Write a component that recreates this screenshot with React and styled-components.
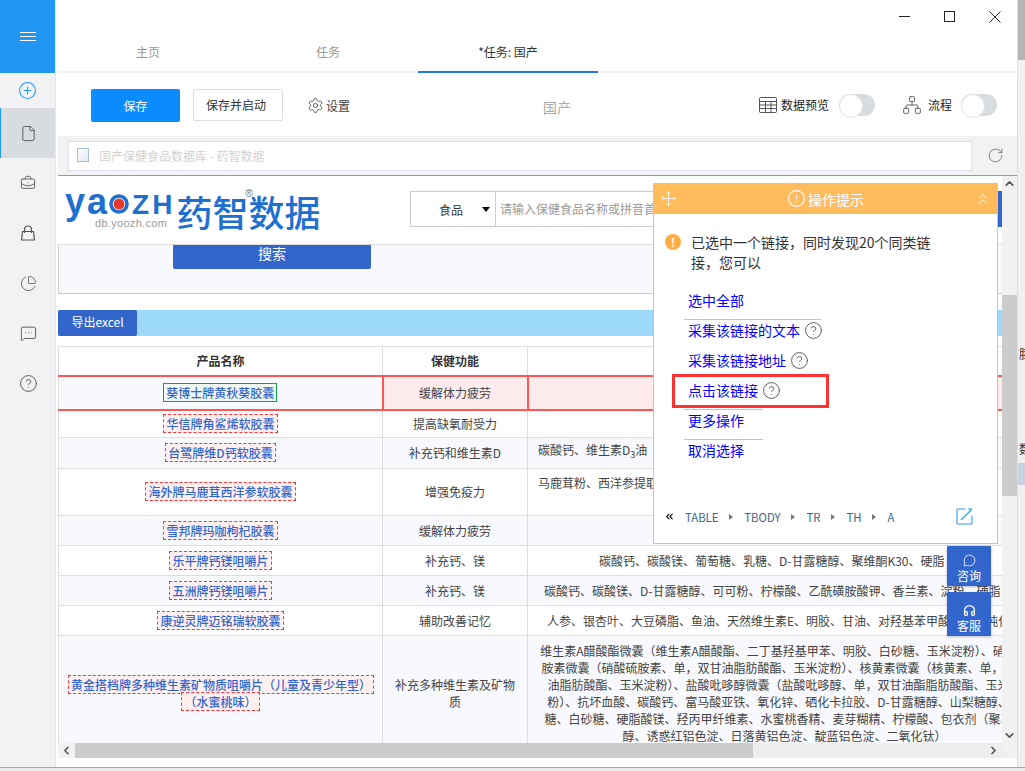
import React from 'react';
import styled, { createGlobalStyle } from 'styled-components';
import {
  File, BriefcaseBusiness, ChartPie, MessageSquareMore, CircleHelp, CirclePlus,
  Settings, Network, RotateCw, Move, ChevronsUp, CircleAlert,
  ChevronUp, ChevronDown, ChevronLeft, ChevronRight, ChevronsLeft, MessageCircle, Headphones,
} from 'lucide-react';

const GlobalStyle = createGlobalStyle`
  html, body, #root { margin: 0; height: 100%; overflow: hidden; }
  body { font-family: "Noto Sans CJK SC", "Noto Sans", sans-serif; font-size: 12px; color: #333; }
  * { box-sizing: border-box; }
`;

const Desktop = styled.div`
  display: flex;
  flex-direction: column;
  height: 100vh;
  background: #efefef;
`;

const Upper = styled.div`
  flex: 0 0 767px;
  display: flex;
  min-height: 0;
`;

const BottomStrip = styled.div`
  flex: 1;
  border-top: 1px solid #a8a8a8;
  background: #ececec;
`;

const BackStrip = styled.div`
  flex: 1;
  position: relative;
  overflow: hidden;
  border-left: 1px solid #ddd;
  background: linear-gradient(#b4b4b4 0 60px, #f0f0f0 60px 463px, #c9d3e0 463px 485px, #f0f0f0 485px);
`;

const BackChar = styled.span`
  position: absolute;
  left: 1px;
  top: ${p => p.$top}px;
`;

const Window = styled.div`
  position: relative;
  width: 1017px;
  display: flex;
  background: #fff;
`;

const Sidebar = styled.aside`
  width: 56px;
  flex: none;
  background: #f2f2f4;
  border-right: 1px solid #e6e6e6;
`;

const MenuButton = styled.div`
  height: 73px;
  background: #2196f3;
  display: flex;
  align-items: center;
  justify-content: center;
`;

const Burger = styled.div`
  width: 16px;
  height: 9px;
  border-top: 1px solid #fff;
  border-bottom: 1px solid #fff;
  position: relative;
  &::after {
    content: '';
    position: absolute;
    left: 0;
    right: 0;
    top: 3px;
    height: 1px;
    background: #fff;
  }
`;

const AddRow = styled.div`
  height: 35px;
  display: flex;
  align-items: center;
  justify-content: center;
  color: #2196f3;
`;

const SideItem = styled.div`
  height: 50px;
  display: flex;
  align-items: center;
  justify-content: center;
  color: #555;
  background: ${p => (p.$active ? '#d9dcdf' : 'transparent')};
  border-left: 1px solid ${p => (p.$active ? '#2196f3' : 'transparent')};
`;

const Main = styled.div`
  flex: 1;
  min-width: 0;
  padding-left: 2px;
  display: flex;
  flex-direction: column;
`;

const TitleBar = styled.div`
  height: 33px;
  display: flex;
  justify-content: flex-end;
`;

const ControlButton = styled.div`
  width: 45px;
  display: flex;
  align-items: center;
  justify-content: center;
`;

const TabStrip = styled.div`
  height: 40px;
  display: flex;
  border-bottom: 2px solid #f2f2f2;
`;

const Tab = styled.div`
  width: 180px;
  height: 40px;
  line-height: 38px;
  text-align: center;
  color: ${p => (p.$active ? '#333' : '#999')};
  border-bottom: 2px solid ${p => (p.$active ? '#1e7bd8' : 'transparent')};
`;

const Toolbar = styled.div`
  height: 63px;
  padding: 16px 20px 0 33px;
  display: flex;
  align-items: flex-start;
`;

const SaveButton = styled.div`
  width: 89px;
  height: 33px;
  line-height: 33px;
  text-align: center;
  color: #fff;
  background: #0a8cff;
  border-radius: 2px;
`;

const StartButton = styled.div`
  width: 90px;
  height: 32px;
  line-height: 30px;
  margin-left: 13px;
  padding-right: 4px;
  text-align: center;
  border: 1px solid #ddd;
  border-radius: 2px;
`;

const SettingsLink = styled.div`
  height: 33px;
  margin-left: 24px;
  display: flex;
  align-items: center;
  gap: 2px;
  color: #444;
`;

const TaskName = styled.div`
  margin: 9px auto 0 193px;
  font-size: 14px;
  line-height: 19px;
  color: #aaa;
`;

const ToolToggle = styled.div`
  height: 22px;
  margin: 5px 0 0 ${p => p.$gap || 0}px;
  display: flex;
  align-items: center;
  color: #222;
`;

const ToggleLabel = styled.span`
  margin: -2px ${p => p.$end}px 0 ${p => p.$gap}px;
`;

const Switch = styled.div`
  width: 36px;
  height: 22px;
  border-radius: 11px;
  background: #d9dcdf;
  position: relative;
  &::before {
    content: '';
    position: absolute;
    left: 0;
    top: 0;
    width: 22px;
    height: 22px;
    border-radius: 50%;
    background: #fff;
    border: 1px solid #e2e2e2;
  }
`;

const UrlBar = styled.div`
  height: 40px;
  padding: 5px 0 0 10px;
  display: flex;
  background: #f2f2f3;
  border-bottom: 1px solid #999;
`;

const UrlInput = styled.div`
  width: 904px;
  height: 30px;
  padding: 0 0 2px 8px;
  display: flex;
  align-items: center;
  gap: 10px;
  background: #fff;
  border: 1px solid #dcdff0;
  color: #d2d2d2;
`;

const PageIcon = styled.div`
  width: 12px;
  height: 14px;
  border: 1px solid #a9bdd4;
  background: linear-gradient(135deg, #fff, #dfe8f2);
`;

const RefreshSlot = styled.div`
  width: 45px;
  display: flex;
  align-items: center;
  justify-content: center;
  padding: 0 0 5px 1px;
  color: #666;
`;

const WebView = styled.div`
  position: relative;
  height: 582px;
  display: grid;
  grid-template-columns: 944px 15px;
  grid-template-rows: 567px 15px;
`;

const Content = styled.div`
  overflow: hidden;
  background: #fff;
`;

const SiteHeader = styled.header`
  height: 69px;
  padding: 15px 0 0 7px;
  display: flex;
  align-items: flex-start;
  border-bottom: 1px solid #ddd;
`;

const Logo = styled.div`
  position: relative;
  height: 40px;
  margin-top: -7px;
  display: flex;
  align-items: baseline;
  color: #1e6fd0;
  font-family: "Liberation Sans", sans-serif;
  font-weight: 700;
  line-height: 36px;
`;

const LogoLower = styled.span`
  font-size: 36px;
  letter-spacing: 2px;
`;

const LogoUpper = styled.span`
  font-size: 28px;
  margin-left: 3px;
  letter-spacing: 3px;
`;

const LogoCn = styled.span`
  align-self: flex-start;
  margin: 9px 0 0 1px;
  font-family: "Noto Sans CJK SC", sans-serif;
  font-size: 36px;
  font-weight: 500;
`;

const LogoDomain = styled.span`
  position: absolute;
  left: 30px;
  top: 33px;
  font-size: 11px;
  font-weight: 400;
  line-height: 12px;
  letter-spacing: 0.3px;
  color: #999;
`;

const LogoMark = styled.span`
  position: absolute;
  left: 180px;
  top: 4px;
  font-size: 11px;
  font-weight: 400;
  line-height: 10px;
  color: #777;
`;

const SearchBox = styled.div`
  margin-left: auto;
  width: 592px;
  height: 36px;
  display: flex;
`;

const SearchKind = styled.div`
  width: 86px;
  padding-left: 28px;
  display: flex;
  align-items: center;
  gap: 19px;
  border: 1px solid #ccc;
  color: #333;
`;

const Caret = styled.i`
  border: 4px solid transparent;
  border-top: 5px solid #000;
  border-bottom: 0;
`;

const SearchInput = styled.div`
  flex: 1;
  padding-left: 4px;
  line-height: 34px;
  color: #999;
  border: 1px solid #ccc;
  border-left: 0;
`;

const SearchSubmit = styled.div`
  width: 80px;
  background: #3366cc;
`;

const SearchPanel = styled.div`
  height: 49px;
  padding-left: 114px;
  background: #f8f9fc;
  border: 1px solid #ccc;
  border-top: 0;
  border-right: 0;
`;

const SearchButton = styled.div`
  width: 198px;
  height: 24px;
  line-height: 16px;
  text-align: center;
  font-size: 14px;
  color: #fff;
  background: #3366cc;
  border-radius: 0 0 2px 2px;
`;

const ExportBar = styled.div`
  height: 26px;
  margin: 16px 0 10px;
  background: #9bd8f9;
`;

const ExportButton = styled.div`
  width: 79px;
  height: 26px;
  line-height: 24px;
  text-align: center;
  color: #fff;
  background: #3366cc;
  border-radius: 2px;
`;

const DataTable = styled.table`
  width: 983px;
  table-layout: fixed;
  border-collapse: collapse;
`;

const Row = styled.tr`
  height: ${p => p.$h}px;
  background: ${p => (p.$odd ? '#f8f9fd' : '#fff')};
`;

const HeadCell = styled.th`
  padding: 0;
  border: 1px solid #ddd;
  font-weight: 700;
  color: #333;
  background: #fff;
`;

const Cell = styled.td`
  padding: 0 0 1px;
  border: 1px solid #ddd;
  text-align: center;
  line-height: 17px;
  color: #444;
`;

const NameCell = styled(Cell)`
  padding: 0 9px 1px;
  ${p => p.$picked && 'border-top: 2px solid #f55; border-bottom: 2px solid #f55;'}
`;

const EffectCell = styled(Cell)`
  padding: 0 8px 1px;
  ${p => p.$picked && 'border: 2px solid #f55; background: #fdeaea;'}
`;

const MaterialCell = styled(Cell)`
  text-align: ${p => (p.$indent === undefined ? 'center' : 'left')};
  padding-left: ${p => p.$indent || 0}px;
  white-space: nowrap;
  overflow: hidden;
  vertical-align: ${p => (p.$top ? 'top' : 'middle')};
  padding-top: ${p => (p.$top ? 5 : 0)}px;
  ${p => p.$picked && 'border: 2px solid #f55; background: #fdeaea;'}
`;

const ProductLink = styled.a`
  padding: 0 2px;
  line-height: 17px;
  font-weight: 500;
  color: #3366cc;
  background: ${p => (p.$picked ? '#f0f8f2' : '#fff0f0')};
  border: 1px ${p => (p.$picked ? 'solid #0ca34a' : 'dashed #f33')};
  -webkit-box-decoration-break: clone;
  box-decoration-break: clone;
`;

const VBar = styled.div`
  grid-column: 2;
  grid-row: 1 / 3;
  display: flex;
  flex-direction: column;
  align-items: center;
  background: #f1f1f1;
  color: #555;
`;

const VArrow = styled.div`
  height: 15px;
  display: flex;
  align-items: center;
  justify-content: center;
`;

const VThumb = styled.div`
  width: 100%;
  height: 201px;
  margin: 104px 0 auto;
  background: #ccc;
`;

const HBar = styled.div`
  display: flex;
  background: #eee;
  color: #555;
`;

const HArrow = styled.div`
  width: 17px;
  display: flex;
  align-items: center;
  justify-content: center;
  background: ${p => (p.$start ? '#f1f1f1' : 'transparent')};
`;

const HThumb = styled.div`
  width: 678px;
  margin-right: auto;
  background: #ccc;
`;

const FloatStack = styled.div`
  position: absolute;
  left: 889px;
  top: 370px;
  display: flex;
  flex-direction: column;
  gap: 6px;
`;

const FloatButton = styled.div`
  width: 44px;
  height: ${p => p.$h}px;
  display: flex;
  flex-direction: column;
  align-items: center;
  justify-content: flex-end;
  padding-bottom: 1px;
  line-height: 18px;
  color: #fff;
  background: #3366cc;
  border-radius: 1px;
  box-shadow: 0 1px 3px rgba(0, 0, 0, 0.25);
`;

const Popup = styled.div`
  position: absolute;
  left: 653px;
  top: 183px;
  width: 345px;
  height: 361px;
  display: flex;
  flex-direction: column;
  background: #fff;
  border: 1px solid #ffbb5c;
  border-top: 0;
`;

const PopupHead = styled.div`
  flex: none;
  height: 31px;
  margin: 0 -1px;
  padding: 0 6px 0 7px;
  display: flex;
  align-items: center;
  justify-content: space-between;
  color: #fff;
  background: #ffbb5c;
`;

const PopupTitle = styled.div`
  display: flex;
  align-items: center;
  gap: 2px;
  font-size: 14px;
`;

const Notice = styled.div`
  margin-top: 18px;
  padding-left: 11px;
  display: flex;
  gap: 10px;
`;

const NoticeDot = styled.div`
  flex: none;
  width: 16px;
  height: 16px;
  margin-top: 2px;
  border-radius: 50%;
  line-height: 16px;
  text-align: center;
  font-size: 12px;
  font-weight: 700;
  color: #fff;
  background: #ffad44;
`;

const NoticeText = styled.div`
  width: 246px;
  font-size: 14px;
  line-height: 20px;
  color: #333;
`;

const ActionList = styled.div`
  margin-top: 8px;
  padding-left: 34px;
`;

const Sep = styled.div`
  width: ${p => p.$w}px;
  height: 1px;
  margin: 9px 0 0 -4px;
  background: #c4c4c4;
`;

const Action = styled.div`
  position: relative;
  height: 20px;
  margin-top: 10px;
  display: flex;
  align-items: center;
  gap: 4px;
  font-size: 14px;
  color: #0000ff;
  ${Sep} + & {
    margin-top: 0;
  }
  svg {
    color: #555;
  }
`;

const ActionMark = styled.div`
  position: absolute;
  left: -16px;
  top: -6px;
  width: 157px;
  height: 34px;
  border: 3px solid #f33;
`;

const Crumbs = styled.div`
  margin: auto 0 18px;
  padding: 0 24px 0 10px;
  display: flex;
  align-items: center;
  font-size: 11.3px;
  color: #3d6585;
`;

const CrumbBack = styled.div`
  display: flex;
  margin-right: 10px;
  color: #111;
`;

const CrumbArrow = styled.i`
  margin: 0 11px;
  border: 3px solid transparent;
  border-left: 4px solid #777;
  border-right: 0;
`;

const CrumbOpen = styled.div`
  margin-left: auto;
  display: flex;
  color: #2b9cf0;
`;

const TAIL_LINES = [
  '维生素A醋酸酯微囊（维生素A醋酸酯、二丁基羟基甲苯、明胶、白砂糖、玉米淀粉）、硝酸硫',
  '胺素微囊（硝酸硫胺素、单，双甘油脂肪酸酯、玉米淀粉）、核黄素微囊（核黄素、单，双甘',
  '油脂肪酸酯、玉米淀粉）、盐酸吡哆醇微囊（盐酸吡哆醇、单，双甘油酯脂肪酸酯、玉米淀',
  '粉）、抗坏血酸、碳酸钙、富马酸亚铁、氧化锌、硒化卡拉胶、D-甘露糖醇、山梨糖醇、麦',
  '糖、白砂糖、硬脂酸镁、羟丙甲纤维素、水蜜桃香精、麦芽糊精、柠檬酸、包衣剂（聚乙二',
  '醇、诱惑红铝色淀、日落黄铝色淀、靛蓝铝色淀、二氧化钛）',
];

const ROWS = [
  { h: 34, name: '葵博士牌黄秋葵胶囊', effect: '缓解体力疲劳', picked: true },
  { h: 28, name: '华信牌角鲨烯软胶囊', effect: '提高缺氧耐受力' },
  { h: 31, name: '台鹭牌维D钙软胶囊', effect: '补充钙和维生素D', text: <>碳酸钙、维生素D<sub style={{ fontSize: 9 }}>3</sub>油</>, indent: 10 },
  { h: 47, name: '海外牌马鹿茸西洋参软胶囊', effect: '增强免疫力', text: '马鹿茸粉、西洋参提取', indent: 10, top: true },
  { h: 30, name: '雪邦牌玛咖枸杞胶囊', effect: '缓解体力疲劳' },
  { h: 30, name: '乐平牌钙镁咀嚼片', effect: '补充钙、镁', text: '碳酸钙、碳酸镁、葡萄糖、乳糖、D-甘露糖醇、聚维酮K30、硬脂', indent: 71 },
  { h: 30, name: '五洲牌钙镁咀嚼片', effect: '补充钙、镁', text: '碳酸钙、碳酸镁、D-甘露糖醇、可可粉、柠檬酸、乙酰磺胺酸钾、香兰素、淀粉、硬脂', indent: 16 },
  { h: 30, name: '康逆灵牌迈铭瑞软胶囊', effect: '辅助改善记忆', text: '人参、银杏叶、大豆磷脂、鱼油、天然维生素E、明胶、甘油、对羟基苯甲酸乙酯、纯化', indent: 19 },
  { h: 115, name: '黄金搭档牌多种维生素矿物质咀嚼片（儿童及青少年型）（水蜜桃味）', effect: '补充多种维生素及矿物质', lines: TAIL_LINES },
];

const CRUMBS = ['TABLE', 'TBODY', 'TR', 'TH', 'A'];

function BagIcon() {
  return (
    <svg width="18" height="18" viewBox="0 0 18 18" fill="none" stroke="currentColor" strokeWidth="1.2">
      <path d="M3.5 7.5h11l1 8.5h-13z" strokeLinejoin="round" />
      <path d="M5.5 9V5.5a3.5 3.5 0 0 1 7 0V9" />
    </svg>
  );
}

function GridIcon() {
  return (
    <svg width="18" height="16" viewBox="0 0 18 16" fill="none" stroke="#555">
      <rect x=".5" y=".5" width="17" height="15" rx="1" />
      <path d="M.5 4.5h17M.5 8h17M.5 11.5h17M6.5 4.5v11M12 4.5v11" />
    </svg>
  );
}

function ExternalIcon() {
  return (
    <svg width="17" height="17" viewBox="0 0 17 17" fill="none" stroke="currentColor" strokeWidth="1.1">
      <path d="M9 1H2a1 1 0 0 0-1 1v13a1 1 0 0 0 1 1h13a1 1 0 0 0 1-1V8" />
      <path d="M5 12 16 1M12 1h4" />
    </svg>
  );
}

function App() {
  return (
    <Desktop>
      <GlobalStyle />
      <Upper>
        <Window>
          <Sidebar>
            <MenuButton><Burger /></MenuButton>
            <AddRow><CirclePlus size={19} strokeWidth={1.3} /></AddRow>
            <SideItem $active><File size={17} strokeWidth={1.3} /></SideItem>
            <SideItem><BriefcaseBusiness size={16} strokeWidth={1.3} /></SideItem>
            <SideItem><BagIcon /></SideItem>
            <SideItem><ChartPie size={17} strokeWidth={1.2} /></SideItem>
            <SideItem><MessageSquareMore size={17} strokeWidth={1.3} /></SideItem>
            <SideItem><CircleHelp size={19} strokeWidth={1.2} /></SideItem>
          </Sidebar>

          <Main>
            <TitleBar>
              <ControlButton>
                <svg width="11" height="11" viewBox="0 0 11 11" stroke="#222"><path d="M0 5.5h11" /></svg>
              </ControlButton>
              <ControlButton>
                <svg width="11" height="11" viewBox="0 0 11 11" stroke="#222" fill="none"><rect x=".5" y=".5" width="10" height="10" /></svg>
              </ControlButton>
              <ControlButton>
                <svg width="12" height="12" viewBox="0 0 12 12" stroke="#222"><path d="M.5.5l11 11M11.5.5l-11 11" /></svg>
              </ControlButton>
            </TitleBar>

            <TabStrip>
              <Tab>主页</Tab>
              <Tab>任务</Tab>
              <Tab $active>*任务: 国产</Tab>
            </TabStrip>

            <Toolbar>
              <SaveButton>保存</SaveButton>
              <StartButton>保存并启动</StartButton>
              <SettingsLink><Settings size={17} strokeWidth={1.2} />设置</SettingsLink>
              <TaskName>国产</TaskName>
              <ToolToggle>
                <GridIcon />
                <ToggleLabel $gap={4} $end={10}>数据预览</ToggleLabel>
                <Switch />
              </ToolToggle>
              <ToolToggle $gap={27}>
                <Network size={20} strokeWidth={1.1} color="#555" />
                <ToggleLabel $gap={6} $end={9}>流程</ToggleLabel>
                <Switch />
              </ToolToggle>
            </Toolbar>

            <UrlBar>
              <UrlInput><PageIcon />国产保健食品数据库 - 药智数据</UrlInput>
              <RefreshSlot><RotateCw size={17} strokeWidth={1.1} /></RefreshSlot>
            </UrlBar>

            <WebView>
              <Content>
                <SiteHeader>
                  <Logo>
                    <LogoLower>ya</LogoLower>
                    <svg width="20" height="20" viewBox="0 0 20 20">
                      <circle cx="10" cy="10" r="8" fill="none" stroke="#1e6fd0" strokeWidth="3.5" />
                      <circle cx="10" cy="10" r="5.5" fill="#e8392e" />
                    </svg>
                    <LogoUpper>ZH</LogoUpper>
                    <LogoCn>药智数据</LogoCn>
                    <LogoDomain>db.yoozh.com</LogoDomain>
                    <LogoMark>®</LogoMark>
                  </Logo>
                  <SearchBox>
                    <SearchKind>食品<Caret /></SearchKind>
                    <SearchInput>请输入保健食品名称或拼音首字母</SearchInput>
                    <SearchSubmit />
                  </SearchBox>
                </SiteHeader>

                <SearchPanel><SearchButton>搜索</SearchButton></SearchPanel>

                <ExportBar><ExportButton>导出excel</ExportButton></ExportBar>

                <DataTable>
                  <colgroup>
                    <col style={{ width: 324 }} />
                    <col style={{ width: 145 }} />
                    <col style={{ width: 514 }} />
                  </colgroup>
                  <thead>
                    <Row $h={29}>
                      <HeadCell>产品名称</HeadCell>
                      <HeadCell>保健功能</HeadCell>
                      <HeadCell />
                    </Row>
                  </thead>
                  <tbody>
                    {ROWS.map((r, i) => (
                      <Row key={r.name} $h={r.h} $odd={i % 2 === 0}>
                        <NameCell $picked={r.picked}>
                          <ProductLink $picked={r.picked}>{r.name}</ProductLink>
                        </NameCell>
                        <EffectCell $picked={r.picked}>{r.effect}</EffectCell>
                        <MaterialCell $picked={r.picked} $indent={r.indent} $top={r.top}>
                          {r.lines ? r.lines.map(l => <div key={l}>{l}</div>) : r.text}
                        </MaterialCell>
                      </Row>
                    ))}
                  </tbody>
                </DataTable>
              </Content>

              <VBar>
                <VArrow><ChevronUp size={13} strokeWidth={3} /></VArrow>
                <VThumb />
                <VArrow><ChevronDown size={13} strokeWidth={3} /></VArrow>
                <VArrow />
              </VBar>

              <HBar>
                <HArrow $start><ChevronLeft size={13} strokeWidth={3} /></HArrow>
                <HThumb />
                <HArrow><ChevronRight size={13} strokeWidth={3} /></HArrow>
              </HBar>

              <FloatStack>
                <FloatButton $h={40}><MessageCircle size={13} strokeWidth={1.5} />咨询</FloatButton>
                <FloatButton $h={44}><Headphones size={13} strokeWidth={2.5} />客服</FloatButton>
              </FloatStack>
            </WebView>
          </Main>

          <Popup>
            <PopupHead>
              <Move size={17} strokeWidth={1.2} />
              <PopupTitle><CircleAlert size={19} strokeWidth={1.4} />操作提示</PopupTitle>
              <ChevronsUp size={18} strokeWidth={1.2} />
            </PopupHead>
            <Notice>
              <NoticeDot>!</NoticeDot>
              <NoticeText>已选中一个链接，同时发现20个同类链接，您可以</NoticeText>
            </Notice>
            <ActionList>
              <Action>选中全部</Action>
              <Sep $w={137} />
              <Action>采集该链接的文本<CircleHelp size={19} strokeWidth={1.2} /></Action>
              <Action>采集该链接地址<CircleHelp size={19} strokeWidth={1.2} /></Action>
              <Action>点击该链接<CircleHelp size={19} strokeWidth={1.2} /><ActionMark /></Action>
              <Sep $w={79} />
              <Action>更多操作</Action>
              <Sep $w={79} />
              <Action>取消选择</Action>
            </ActionList>
            <Crumbs>
              <CrumbBack><ChevronsLeft size={11} strokeWidth={2.5} /></CrumbBack>
              {CRUMBS.map((c, i) => (
                <React.Fragment key={c}>
                  {i > 0 && <CrumbArrow />}
                  {c}
                </React.Fragment>
              ))}
              <CrumbOpen><ExternalIcon /></CrumbOpen>
            </Crumbs>
          </Popup>
        </Window>

        <BackStrip>
          <BackChar $top={345}>膝</BackChar>
          <BackChar $top={440}>数</BackChar>
        </BackStrip>
      </Upper>
      <BottomStrip />
    </Desktop>
  );
}

export default App;
